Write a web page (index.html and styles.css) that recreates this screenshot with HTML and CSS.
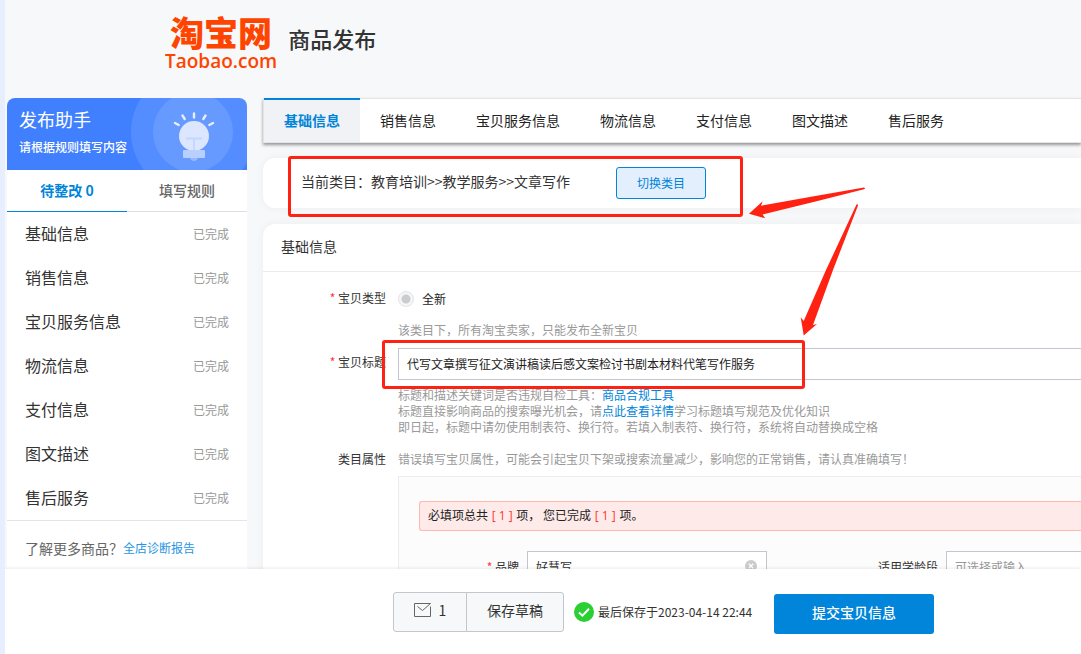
FILE: index.html
```html
<!DOCTYPE html>
<html lang="zh-CN">
<head>
<meta charset="utf-8">
<meta name="viewport" content="width=device-width, initial-scale=1">
<title>商品发布</title>
<link rel="stylesheet" href="styles.css">
</head>
<body>
<div class="page">
  <header class="header">
    <a class="logo" href="#"><span class="logo-cn">淘宝网</span><span class="logo-en">Taobao.com</span></a>
    <h1 class="header-title">商品发布</h1>
  </header>

  <div class="body">
    <aside class="helper">
      <div class="banner">
        <div class="banner-text">
          <h2 class="banner-title">发布助手</h2>
          <p class="banner-sub">请根据规则填写内容</p>
        </div>
        <svg class="banner-art" viewBox="0 0 116 72" aria-hidden="true">
          <circle cx="62" cy="34" r="62" fill="#fff" fill-opacity=".1"/>
          <circle cx="62" cy="34" r="40" fill="#fff" fill-opacity=".12"/>
          <g stroke="#e6eeff" stroke-width="2.4" stroke-linecap="round">
            <path d="M63 15.500v4M51.500 17.500l2.200 3.500M74.500 17.500l-2.200 3.500M44 25l3.700 2M82 25l-3.700 2"/>
          </g>
          <circle cx="63" cy="38" r="15" fill="#dce7ff"/>
          <path d="M55 40.500h16M63 40.500v12" stroke="#c3d6ff" stroke-width="1.800"/>
          <rect x="52" y="52" width="22" height="8" rx="1" fill="#b9cfff"/>
          <path d="M59 60h8q-1 3-4 3t-4-3z" fill="#96b8ff"/>
        </svg>
      </div>
      <div class="helper-tabs" role="tablist">
        <button class="helper-tab helper-tab-on" role="tab" aria-selected="true">待整改 0</button>
        <button class="helper-tab" role="tab" aria-selected="false">填写规则</button>
      </div>
      <ul class="steps">
        <li class="step"><span>基础信息</span><span class="step-state">已完成</span></li>
        <li class="step"><span>销售信息</span><span class="step-state">已完成</span></li>
        <li class="step"><span>宝贝服务信息</span><span class="step-state">已完成</span></li>
        <li class="step"><span>物流信息</span><span class="step-state">已完成</span></li>
        <li class="step"><span>支付信息</span><span class="step-state">已完成</span></li>
        <li class="step"><span>图文描述</span><span class="step-state">已完成</span></li>
        <li class="step"><span>售后服务</span><span class="step-state">已完成</span></li>
      </ul>
      <p class="more"><span>了解更多商品？</span><a class="more-link" href="#">全店诊断报告</a></p>
    </aside>

    <main class="content">
      <nav class="tabs">
        <a class="tab tab-on" href="#">基础信息</a>
        <a class="tab" href="#">销售信息</a>
        <a class="tab" href="#">宝贝服务信息</a>
        <a class="tab" href="#">物流信息</a>
        <a class="tab" href="#">支付信息</a>
        <a class="tab" href="#">图文描述</a>
        <a class="tab" href="#">售后服务</a>
      </nav>

      <section class="card category">
        <span class="category-path">当前类目：教育培训&gt;&gt;教学服务&gt;&gt;文章写作</span>
        <button class="switch">切换类目</button>
        <span class="mark mark-category"></span>
      </section>

      <section class="card basic">
        <h2 class="card-title">基础信息</h2>
        <div class="form">
          <div class="row">
            <span class="label required">宝贝类型</span>
            <div class="control">
              <label class="radio"><input class="radio-input" type="radio" name="kind" checked disabled>全新</label>
              <p class="hint">该类目下，所有淘宝卖家，只能发布全新宝贝</p>
            </div>
          </div>
          <div class="row row-title">
            <label class="label required" for="title">宝贝标题</label>
            <div class="control">
              <input class="title-input" id="title" type="text" value="代写文章撰写征文演讲稿读后感文案检讨书剧本材料代笔写作服务">
              <p class="hint hint-title">标题和描述关键词是否违规自检工具：<a class="link" href="#">商品合规工具</a><br>标题直接影响商品的搜索曝光机会，请<a class="link" href="#">点此查看详情</a>学习标题填写规范及优化知识<br>即日起，标题中请勿使用制表符、换行符。若填入制表符、换行符，系统将自动替换成空格</p>
            </div>
            <span class="mark mark-title"></span>
          </div>
          <div class="row row-attr">
            <span class="label">类目属性</span>
            <div class="control">
              <p class="hint hint-attr">错误填写宝贝属性，可能会引起宝贝下架或搜索流量减少，影响您的正常销售，请认真准确填写！</p>
              <div class="attrs">
                <p class="notice">必填项总共 <span class="count">[ 1 ]</span> 项， 您已完成 <span class="count">[ 1 ]</span> 项。</p>
                <div class="fields">
                  <div class="field">
                    <label class="field-label required" for="brand">品牌</label>
                    <div class="field-box">
                      <input class="field-input" id="brand" type="text" value="好慧写">
                      <svg class="clear" viewBox="0 0 12 12" aria-hidden="true"><circle cx="6" cy="6" r="6" fill="#ccc"/><path d="M3.800 3.800l4.400 4.400M8.200 3.800l-4.400 4.400" stroke="#fff" stroke-width="1.300"/></svg>
                    </div>
                  </div>
                  <div class="field">
                    <label class="field-label" for="age">适用学龄段</label>
                    <div class="field-box"><input class="field-input" id="age" type="text" placeholder="可选择或输入"></div>
                  </div>
                </div>
              </div>
            </div>
          </div>
        </div>
      </section>

      <svg class="arrows" viewBox="740 180 130 160" aria-hidden="true">
        <path fill="#ff2212" d="M749 213.700L762.700 201.300L761 205.700Q812 196.500 864 187.500Q866 188.300 864 189.200Q812 202.500 762.500 214.500L765.300 218.300Z"/>
        <path fill="#ff2212" d="M803.700 335.500L800.700 317.300L803.700 321L826 270L856.500 204.500Q858 203.500 858 205.500L833 270L813 325L817 324Z"/>
      </svg>
    </main>
  </div>

  <footer class="footer">
    <div class="drafts">
      <button class="draft draft-mail" aria-label="消息 1">
        <svg class="mail" viewBox="0 0 17 14" fill="none" stroke="#666" aria-hidden="true"><path d="M16.500 3.500V13.500H.5V.5H16.500L8.500 7.500L3.500 3.500"/></svg>
        <span>1</span>
      </button>
      <button class="draft draft-save">保存草稿</button>
    </div>
    <div class="saved">
      <svg class="ok" viewBox="0 0 20 20" aria-hidden="true"><circle cx="10" cy="10" r="10" fill="#2bcf33"/><path d="M5 10.500l3.400 3.200L15 6.800" fill="none" stroke="#fff" stroke-width="2"/></svg>
      <span class="saved-text">最后保存于2023-04-14 22:44</span>
    </div>
    <button class="submit">提交宝贝信息</button>
  </footer>
</div>
</body>
</html>
```

FILE: styles.css
```css
* {
  box-sizing: border-box;
}

body,
h1,
h2,
p,
ul {
  margin: 0;
  padding: 0;
}

body,
button,
input {
  font-family: "Noto Sans CJK SC", sans-serif;
  font-size: 14px;
  color: #333;
}

a {
  text-decoration: none;
}

button {
  cursor: pointer;
}

.page {
  display: flex;
  flex-direction: column;
  height: 100vh;
  overflow: hidden;
  border-left: 5px solid #e7eeff;
  background: #f7f8fa;
}

/* Header */
.header {
  display: flex;
  flex: none;
  align-items: flex-start;
  gap: 11px;
  padding: 14px 0 0 160px;
  height: 98px;
}

.logo {
  display: flex;
  flex-direction: column;
  align-items: center;
  color: #ff4400;
}

.logo-cn {
  font-size: 34px;
  font-weight: 900;
  line-height: 36px;
}

.logo-en {
  font-family: "Open Sans", sans-serif;
  font-size: 19px;
  font-weight: 600;
  line-height: 22px;
}

.header-title {
  padding-top: 8px;
  font-size: 22px;
  font-weight: 500;
  line-height: 32px;
}

/* Two columns */
.body {
  display: flex;
  flex: 1;
  gap: 16px;
  min-height: 0;
  padding-left: 2px;
}

.helper {
  flex: none;
  width: 240px;
  background: #fff;
  border-radius: 8px 8px 0 0;
}

.banner {
  display: flex;
  justify-content: space-between;
  overflow: hidden;
  height: 72px;
  border-radius: 8px 8px 0 0;
  background: #4080ff;
  color: #fff;
}

.banner-text {
  flex: none;
  width: 124px;
  padding: 8px 0 0 12px;
  white-space: nowrap;
}

.banner-title {
  font-size: 18px;
  font-weight: 400;
  line-height: 26px;
}

.banner-sub {
  font-size: 12px;
  font-weight: 500;
  line-height: 30px;
}

.banner-art {
  flex: none;
  width: 116px;
  height: 72px;
}

.helper-tabs {
  display: flex;
}

.helper-tab {
  flex: 1;
  height: 42px;
  padding: 0 0 2px;
  border: 0;
  border-bottom: 1px solid #dcdee3;
  background: none;
  font-weight: 500;
  color: #666;
}

.helper-tab-on {
  border-bottom-color: #0085da;
  font-weight: 700;
  color: #0085da;
}

.steps {
  border-bottom: 1px solid #e3e4ec;
  list-style: none;
}

.step {
  display: flex;
  align-items: center;
  justify-content: space-between;
  height: 44px;
  padding: 0 18px 2px;
  font-size: 16px;
}

.step-state {
  font-size: 12px;
  color: #999;
}

.more {
  display: flex;
  align-items: center;
  padding: 16px 18px;
  line-height: 22px;
  color: #666;
}

.more-link {
  font-size: 12px;
  color: #2795e3;
}

.content {
  position: relative;
  flex: 1;
  min-width: 0;
}

/* Section tabs */
.tabs {
  display: flex;
  height: 45px;
  border: 1px solid #e3e4e6;
  border-right: 0;
  background: #fff;
  box-shadow: 0 2px 3px rgba(0, 0, 0, 0.4);
}

.tab {
  margin-top: -1px;
  padding: 0 20px 2px;
  border-top: 2px solid transparent;
  line-height: 40px;
  white-space: nowrap;
  color: #222;
}

.tab-on {
  border-top-color: #0085da;
  background: #f0f2f6;
  font-weight: 700;
  color: #0085da;
}

/* Cards */
.card {
  position: relative;
  border-radius: 12px 0 0 12px;
  background: #fff;
  box-shadow: 0 0 10px rgba(0, 0, 0, 0.05);
}

.category {
  display: flex;
  align-items: center;
  gap: 46px;
  height: 50px;
  margin-top: 15px;
  padding-left: 38px;
}

.category-path {
  padding-bottom: 4px;
}

.switch {
  width: 90px;
  height: 32px;
  padding: 0 0 2px;
  border: 1px solid #0085da;
  border-radius: 3px;
  background: #e4effd;
  font-size: 12px;
  color: #0085da;
}

.basic {
  margin-top: 16px;
  border-radius: 12px 0 0 0;
}

.card-title {
  padding: 0 0 2px 18px;
  border-bottom: 1px solid #ebecf0;
  font-size: 14px;
  font-weight: 400;
  line-height: 45px;
}

/* Form */
.form {
  padding-top: 18px;
  font-size: 12px;
}

.row {
  position: relative;
  display: flex;
  gap: 12px;
}

.row-title {
  margin-top: 10px;
}

.row-attr {
  margin-top: 16px;
}

.label {
  flex: none;
  width: 123px;
  line-height: 16px;
  text-align: right;
}

.row-title .label {
  line-height: 28px;
}

.required::before {
  content: "* ";
  color: #ff3333;
}

.control {
  flex: 1;
  min-width: 0;
  white-space: nowrap;
}

.radio {
  display: flex;
  align-items: center;
  gap: 8px;
  line-height: 18px;
  color: #222;
}

.radio-input {
  width: 16px;
  height: 16px;
  margin: 0;
  border: 1px solid #e3e4e8;
  border-radius: 8px;
  background: radial-gradient(circle, #ccc 4px, #f5f6f8 5px);
  appearance: none;
}

.hint {
  padding-top: 14px;
  line-height: 16px;
  color: #999;
}

.hint-title {
  padding-top: 7px;
}

.hint-attr {
  padding-top: 0;
}

.link {
  color: #0085da;
}

.title-input {
  display: block;
  width: 100%;
  height: 32px;
  padding: 0 8px 2px;
  border: 1px solid #c4c6cf;
  border-right: 0;
  background: #fff;
  font-size: 12px;
  color: #222;
}

.attrs {
  margin-top: 9px;
  padding: 24px 0 40px 20px;
  border: 1px solid #ebecf0;
  border-right: 0;
  background: #fcfcfc;
}

.notice {
  padding: 0 8px 2px;
  border: 1px solid #ffb9ae;
  border-right: 0;
  border-radius: 3px 0 0 3px;
  background: #feeae8;
  line-height: 26px;
  color: #222;
}

.count {
  margin: 0 1px;
  font-family: "Open Sans", sans-serif;
  line-height: 16px;
  color: #ff3333;
}

.fields {
  display: flex;
  overflow: hidden;
  padding-top: 20px;
}

.field {
  display: flex;
  flex: none;
  gap: 8px;
  width: 419px;
}

.field-label {
  width: 100px;
  line-height: 32px;
  text-align: right;
}

.field-box {
  position: relative;
  width: 240px;
}

.field-input {
  width: 100%;
  height: 32px;
  padding: 0 8px 2px;
  border: 1px solid #c4c6cf;
  background: #fff;
  font-size: 12px;
}

.field-input::placeholder {
  color: #999;
}

.clear {
  position: absolute;
  top: 9px;
  right: 10px;
  width: 12px;
  height: 12px;
}

/* Red annotations over the form */
.mark {
  position: absolute;
  border: 3px solid #ff2212;
  border-radius: 3px;
  pointer-events: none;
}

.mark-category {
  top: -2px;
  left: 25px;
  width: 455px;
  height: 61px;
}

.mark-title {
  top: -8px;
  left: 119px;
  width: 423px;
  height: 49px;
}

.arrows {
  position: absolute;
  top: 82px;
  left: 477px;
  width: 130px;
  height: 160px;
  pointer-events: none;
}

/* Bottom bar */
.footer {
  position: relative;
  display: flex;
  flex: none;
  align-items: flex-start;
  height: 85px;
  padding: 23px 0 0 388px;
  background: #fff;
  box-shadow: 0 -1px 3px rgba(0, 0, 0, 0.08);
}

.drafts {
  display: flex;
}

.draft {
  display: flex;
  align-items: center;
  justify-content: center;
  gap: 8px;
  height: 40px;
  padding: 0 0 4px;
  border: 1px solid #c4c6cf;
  background: #f7f8fa;
}

.draft-mail {
  width: 74px;
  border-radius: 3px 0 0 3px;
}

.draft-save {
  width: 98px;
  margin-left: -1px;
  border-radius: 0 3px 3px 0;
}

.mail {
  width: 17px;
  height: 14px;
}

.saved {
  display: flex;
  align-items: center;
  gap: 4px;
  width: 200px;
  height: 40px;
  margin-left: 10px;
  font-size: 12px;
  white-space: nowrap;
}

.saved-text {
  padding-bottom: 2px;
}

.ok {
  width: 20px;
  height: 20px;
}

.submit {
  width: 160px;
  height: 40px;
  margin-top: 2px;
  padding: 0 0 4px;
  border: 0;
  border-radius: 3px;
  background: #0085da;
  font-weight: 500;
  color: #fff;
}
```
